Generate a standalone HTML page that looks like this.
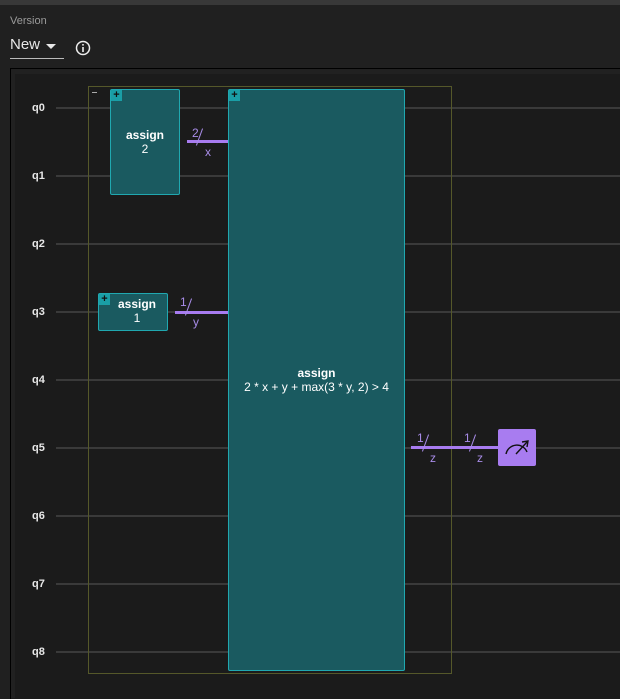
<!DOCTYPE html>
<html><head><style>
body{margin:0;width:620px;height:698px;background:#202020;overflow:hidden;font-family:"Liberation Sans",sans-serif;position:relative}
.a{position:absolute}
.w{position:absolute;left:56px;width:564px;height:2px;background:#3a3a3a}
.q{position:absolute;left:32px;color:#e8e8e8;font-size:11px;font-weight:bold}
.box{position:absolute;background:#1a5a60;border:1px solid #20a8b0;border-radius:2px;box-sizing:border-box;color:#fff;font-size:12px;text-align:center;line-height:14px}
.pl{position:absolute;width:11px;height:11px;background:#1a9ea6;color:#111;font-size:11px;line-height:11px;text-align:center;font-weight:bold}
.pw{position:absolute;height:3px;background:#a87cf0}
.lb{position:absolute;color:#a88ce8;font-size:12px}
</style></head><body>
<div class="a" style="left:0;top:0;width:620px;height:5px;background:#383838"></div>
<div class="a" style="left:10px;top:15px;color:#9a9a9a;font-size:11px">Version</div>
<div class="a" style="left:10px;top:36px;color:#e8e8e8;font-size:15px">New</div>
<div class="a" style="left:46px;top:44px;width:0;height:0;border-left:5px solid transparent;border-right:5px solid transparent;border-top:5px solid #e8e8e8"></div>
<div class="a" style="left:10px;top:58px;width:54px;height:1px;background:#bbb"></div>
<svg class="a" style="left:75px;top:40px" width="16" height="16"><circle cx="8" cy="8" r="6.5" fill="none" stroke="#eee" stroke-width="1.5"/><rect x="7.2" y="7" width="1.6" height="5" fill="#eee"/><rect x="7.2" y="4" width="1.6" height="1.6" fill="#eee"/></svg>
<div class="a" style="left:10px;top:68px;width:610px;height:630px;background:#1b1b1b;border-left:1px solid #000;border-top:1px solid #000"></div>
<div class="a" style="left:11px;top:69px;width:609px;height:5px;background:#212121"></div>
<div class="a" style="left:11px;top:69px;width:4px;height:629px;background:#212121"></div>
<div class="w" style="top:107px"></div><div class="w" style="top:175px"></div><div class="w" style="top:243px"></div><div class="w" style="top:311px"></div><div class="w" style="top:379px"></div><div class="w" style="top:447px"></div><div class="w" style="top:515px"></div><div class="w" style="top:583px"></div><div class="w" style="top:651px"></div>
<div class="q" style="top:102px">q0</div><div class="q" style="top:170px">q1</div><div class="q" style="top:238px">q2</div><div class="q" style="top:306px">q3</div><div class="q" style="top:374px">q4</div><div class="q" style="top:442px">q5</div><div class="q" style="top:510px">q6</div><div class="q" style="top:578px">q7</div><div class="q" style="top:646px">q8</div>
<div class="a" style="left:88px;top:86px;width:362px;height:586px;border:1px solid #55582a;background:transparent"></div>
<div class="a" style="left:92px;top:92px;width:5px;height:1px;background:#aaa"></div>
<div class="pw" style="left:187px;top:140px;width:41px"></div>
<div class="lb" style="left:192px;top:126px">2</div><div class="a" style="left:199px;top:128px;width:1px;height:18px;background:#a88ce8;transform:rotate(20deg)"></div><div class="lb" style="left:205px;top:145px">x</div>
<div class="pw" style="left:175px;top:311px;width:53px"></div>
<div class="lb" style="left:180px;top:295px">1</div><div class="a" style="left:188px;top:298px;width:1px;height:18px;background:#a88ce8;transform:rotate(20deg)"></div><div class="lb" style="left:193px;top:315px">y</div>
<div class="pw" style="left:411px;top:446px;width:88px"></div>
<div class="lb" style="left:417px;top:431px">1</div><div class="a" style="left:425px;top:434px;width:1px;height:18px;background:#a88ce8;transform:rotate(20deg)"></div><div class="lb" style="left:430px;top:451px">z</div>
<div class="lb" style="left:464px;top:431px">1</div><div class="a" style="left:472px;top:434px;width:1px;height:18px;background:#a88ce8;transform:rotate(20deg)"></div><div class="lb" style="left:477px;top:451px">z</div>
<div class="box" style="left:110px;top:89px;width:70px;height:106px;padding-top:38px;font-weight:bold">assign<br><span style="font-weight:normal">2</span></div>
<div class="pl" style="left:111px;top:90px">+</div>
<div class="box" style="left:228px;top:89px;width:177px;height:582px;padding-top:276px"><b>assign</b><br>2 * x + y + max(3 * y, 2) &gt; 4</div>
<div class="pl" style="left:229px;top:90px">+</div>
<div class="box" style="left:98px;top:293px;width:70px;height:38px;padding-top:3px;padding-left:8px;font-weight:bold">assign<br><span style="font-weight:normal">1</span></div>
<div class="pl" style="left:99px;top:294px">+</div>
<div class="a" style="left:498px;top:429px;width:38px;height:37px;background:#a87cf0;border-radius:2px"></div>
<svg class="a" style="left:498px;top:429px" width="38" height="37"><path d="M8 25 A11 11 0 0 1 29 23" fill="none" stroke="#111" stroke-width="1.4"/><path d="M18 25 L29 13" stroke="#111" stroke-width="1.4"/><path d="M24 13 L30 12 L29 18" fill="none" stroke="#111" stroke-width="1.4"/></svg>
</body></html>
